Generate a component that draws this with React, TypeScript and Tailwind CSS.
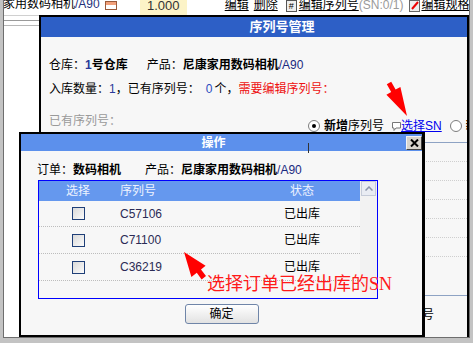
import React from "react";

function Radio({ checked }: { checked?: boolean }) {
  return (
    <div className="w-[12px] h-[12px] rounded-full border border-[#7d7d7d] bg-white flex items-center justify-center shrink-0">
      {checked && <div className="w-[4px] h-[4px] rounded-full bg-black" />}
    </div>
  );
}

function Checkbox() {
  return (
    <div className="w-[13px] h-[13px] border border-[#1f3f78] bg-gradient-to-br from-[#d9d9d9] to-[#fbfbfb]" />
  );
}

const rows = ["C57106", "C71100", "C36219"];

export default function App() {
  return (
    <div className="w-[473px] h-[343px] bg-[#c3c3c3] pl-[3px] pr-[3px] pb-[5px] font-['Liberation_Sans','Noto_Sans_CJK_SC',sans-serif] text-[12px] text-black">
      <div className="relative h-full border-l border-r border-b border-[#6e6e6e] bg-white overflow-hidden">
        {/* background page: top row */}
        <div className="flex h-[15px] items-start whitespace-nowrap">
          <div className="flex items-start leading-[12px] -mt-[2px]">
            <span className="-ml-[1px]">家用数码相机</span>
            <span className="text-[#23307a]">/A90</span>
            <svg className="ml-[5px] mt-[3px] shrink-0" width="12" height="9" viewBox="0 0 12 9">
              <rect x="0.5" y="0.5" width="11" height="8" fill="#fff" stroke="#9a5a3a" />
              <rect x="1" y="1" width="10" height="3" fill="#f2a07a" />
            </svg>
          </div>
          <div className="ml-[23px] w-[47px] h-[15px] bg-[#fcf3c7] text-center text-[13px] text-[#333] leading-[11px] shrink-0">1.000</div>
          <div className="flex items-start leading-[12px] -mt-[1px]">
            <span className="ml-[38px] underline">编辑</span>
            <span className="ml-[5px] underline">删除</span>
            <div className="ml-[8px] mt-[1px] w-[11px] h-[12px] border border-[#555] bg-[#eee] text-[9px] leading-[10px] text-center shrink-0">#</div>
            <span className="ml-[2px] underline">编辑序列号</span>
            <span className="text-[#9a9a9a]">(SN:0/1)</span>
            <svg className="ml-[6px] mt-[1px] shrink-0" width="11" height="12" viewBox="0 0 11 12">
              <rect x="0.5" y="0.5" width="10" height="11" fill="#eee" stroke="#666" />
              <path d="M3 9 L9 2" stroke="#e00" strokeWidth="2" />
            </svg>
            <span className="ml-[1px] underline">编辑规格</span>
          </div>
        </div>
        <div className="h-[5px] border-t border-[#d0d0d0]" />
        <div className="h-[5px] border-t border-[#9a9a9a]" />
        <div className="border-t border-[#b8b8b8]" />

        {/* dialog 1: 序列号管理 */}
        <div className="absolute left-[35px] top-[15px] w-[430px] h-[330px] border-2 border-black bg-[#f7f7f7] overflow-hidden">
          <div className="h-[20px] bg-[#2d5fc6] flex items-center justify-center pl-[56px] text-white font-bold text-[13px]">
            序列号管理
          </div>
          <div className="px-[8px] pt-[20px] whitespace-nowrap">
            <div className="leading-[16px]">
              仓库：<b><span className="text-[#2a3a9a]">1</span>号仓库</b>
              <span className="inline-block ml-[19px]">产品：</span>
              <b>尼康家用数码相机</b>
              <span className="text-[#1a2a80]">/A90</span>
            </div>
            <div className="leading-[16px] mt-[8px]">
              入库数量：<span className="text-[#2a3a9a]">1</span>，已有序列号：
              <span className="inline-block ml-[6px] text-[#2a4ac0]">0</span>
              <span className="inline-block ml-[2px]">个，</span>
              <span className="text-[#ee1111]">需要编辑序列号：</span>
            </div>
            <div className="flex h-[20px] mt-[16px]">
              <div className="self-start leading-[16px] text-[#9a9a9a]">已有序列号：</div>
              <div className="self-end ml-[187px] h-[14px] flex items-center shrink-0">
                <Radio checked />
                <b className="ml-[4px]">新增</b>
                <span>序列号</span>
                <svg className="ml-[8px] shrink-0" width="9" height="9" viewBox="0 0 9 9">
                  <path d="M0.5 0.5 H8.5 V6 H4 L2 8.5 V6 H0.5 Z" fill="#fff" stroke="#777" />
                </svg>
                <span className="text-[#0000ee] underline">选择SN</span>
                <div className="ml-[8px]">
                  <Radio />
                </div>
                <b className="ml-[4px]">新</b>
              </div>
            </div>
            <div className="mt-[9px] -mr-[8px] border-t border-[#8ea3c4]">
              {[0, 1, 2, 3, 4, 5].map((i) => (
                <div key={i} className="h-[19px] border-b border-dotted border-[#cfcfcf]" />
              ))}
              <div className="h-[39px] border-b border-[#8ea3c4]" />
            </div>
            <div className="mt-[11px] text-right pr-[25px] leading-[16px]">批量序列号</div>
          </div>
        </div>

        {/* dialog 2: 操作 */}
        <div className="absolute left-[15px] top-[132px] w-[406px] h-[205px] border-2 border-r-[3px] border-black bg-[#f7f7f7] flex flex-col">
          <div className="h-[17px] bg-[#5c90ec] flex items-center">
            <div className="flex-1 text-center text-white font-bold leading-[14px]">操作</div>
            <div className="w-[16px] h-[14px] bg-[#d8d4cc] border border-t-[#f4f4f4] border-l-[#f4f4f4] border-r-[#404040] border-b-[#404040] flex items-center justify-center">
              <svg width="9" height="8" viewBox="0 0 9 8">
                <path d="M1 0.5 L8 7.5 M8 0.5 L1 7.5" stroke="#000" strokeWidth="2" />
              </svg>
            </div>
          </div>
          <div className="pt-[11px]">
            <div className="pl-[16px]">
              <div className="leading-[16px] whitespace-nowrap">
                订单：<b>数码相机</b>
                <span className="inline-block ml-[24px]">产品：</span>
                <b>尼康家用数码相机</b>
                <span className="text-[#1a2a80]">/A90</span>
              </div>
              <div className="mt-[2px] ml-[1px] w-[340px] h-[119px] border border-[#0000ff] flex bg-[#f7f7f7]">
                <div className="w-[321px] flex flex-col">
                  <div className="h-[20px] bg-[#6598ee] grid grid-cols-[78px_127px_116px] items-center text-[#eef3ff] leading-[14px]">
                    <div className="text-center">选择</div>
                    <div className="pl-[3px]">序列号</div>
                    <div className="text-center">状态</div>
                  </div>
                  {rows.map((sn, i) => (
                    <div
                      key={sn}
                      className={`grid grid-cols-[78px_127px_116px] items-center border-b border-dotted border-[#bdbdbd] ${i === 0 ? "h-[26px]" : "h-[27px]"}`}
                    >
                      <div className="flex justify-center">
                        <Checkbox />
                      </div>
                      <div className="pl-[3px] text-[#2b2b55] leading-[14px]">{sn}</div>
                      <div className="text-center leading-[14px]">已出库</div>
                    </div>
                  ))}
                </div>
                <div className="w-[17px] flex flex-col bg-[#f2f2f2]">
                  <div className="h-[15px] mx-[1px] bg-[#e9ecf3] border border-[#c5cbd8] flex items-center justify-center">
                    <svg width="8" height="5" viewBox="0 0 8 5">
                      <path d="M0.5 4.5 L4 1 L7.5 4.5" fill="none" stroke="#8a93a8" strokeWidth="1.5" />
                    </svg>
                  </div>
                </div>
              </div>
            </div>
            <div className="flex justify-center mt-[5px]">
              <div className="w-[74px] h-[20px] rounded-[3px] border border-[#6f85a8] bg-gradient-to-b from-[#ffffff] to-[#e2e2e2] flex items-center justify-center leading-[14px]">
                确定
              </div>
            </div>
          </div>
        </div>

        {/* small caret line over dialog title */}
        <div className="absolute left-[304px] top-[143px] w-[1px] h-[10px] bg-[#333]" />

        {/* annotations */}
        <svg className="absolute left-[-4px] top-0 pointer-events-none" width="473" height="343" viewBox="0 0 473 343">
          <polygon
            points="391.2,81.8 395.6,89.6 400.4,86.9 407,116 386.4,94.7 391.2,92 386.8,84.2"
            fill="#ff0000"
          />
          <polygon
            points="184,252 205.6,265.8 201,269.4 206,276 201.6,279.4 196.8,272.8 191.4,277"
            fill="#ff0000"
          />
        </svg>
        <div className="absolute left-[203px] top-[274px] text-[18px] leading-[20px] text-[#ff1a1a] whitespace-nowrap font-['Liberation_Serif','Noto_Sans_CJK_SC',serif]">
          选择订单已经出库的SN
        </div>
      </div>
    </div>
  );
}
